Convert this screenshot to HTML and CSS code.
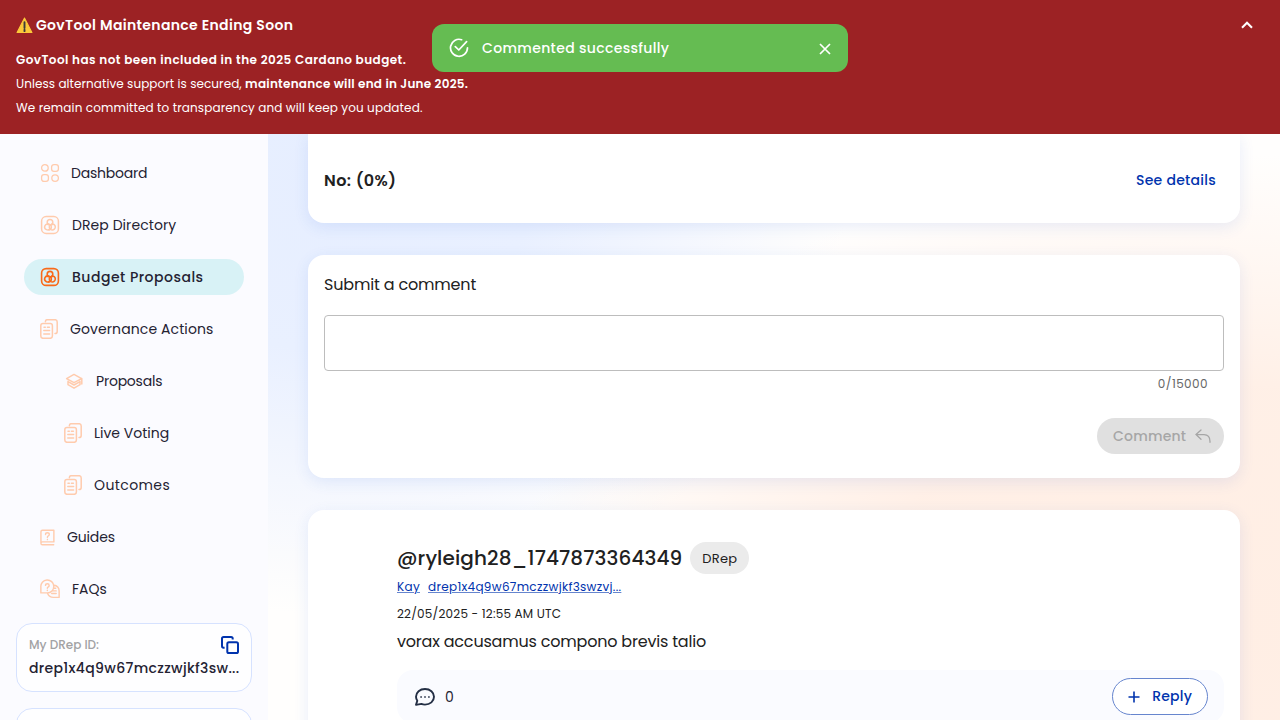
FILE: index.html
```
<!DOCTYPE html>
<html lang="en">
<head>
<meta charset="utf-8">
<title>GovTool</title>
<link rel="stylesheet" href="styles.css">
</head>
<body>
<svg class="defs" width="0" height="0" aria-hidden="true">
  <symbol id="i-grid" viewBox="0 0 20 20"><circle cx="4.9" cy="4.9" r="3.3"/><rect x="11.6" y="1.6" width="6.8" height="6.8" rx="2.4"/><rect x="1.6" y="11.6" width="6.8" height="6.8" rx="2.4"/><circle cx="15.1" cy="15.1" r="3.3"/></symbol>
  <symbol id="i-drep" viewBox="0 0 20 20"><rect x="1.6" y="1.6" width="16.8" height="16.8" rx="4.5"/><circle cx="10" cy="7.2" r="2.8"/><path d="M8.2 9A3 3 0 1 0 10.2 13.5M11.8 9A3 3 0 1 1 9.4 11.2M7.3 9.3A3 3 0 1 1 7.6 15M12.7 9.3 10 10.3"/></symbol>
  <symbol id="i-docs" viewBox="0 0 18 20"><rect x=".8" y="4.6" width="11.6" height="14.7" rx="2.2"/><path d="M5.4 2.8V2.5Q5.4.7 7.2.7H15Q17.2.7 17.2 2.9V12.5Q17.2 14.6 15 14.6M4 8.2H5.3M7.4 8.2H9.4M3.8 11.4H9.6M3.8 14.9H9.6"/></symbol>
  <symbol id="i-cap" viewBox="0 0 20 20"><path d="M10 3.4 2.6 7.6 10 11.7 17.6 7.6ZM17.8 7.6V13M4 10.2V13.7L10 17.2 16 13.7V10.2M4 10.6 10 14 16 10.6"/></symbol>
  <symbol id="i-book" viewBox="0 0 16 18"><path d="M1 15.1V2.8Q1 1.2 2.6 1.2H14.8V13.7H2.4Q1 13.7 1 15.1 1 16.8 2.6 16.8H14.6M5.9 5.8Q5.9 4 7.9 4 9.9 4 9.9 5.8 9.9 7 8.6 7.6 7.9 8 7.9 9M7.9 11V11.3"/></symbol>
  <symbol id="i-faq" viewBox="0 0 21 20"><path d="M.9 14.1V7.9A6.8 6.8 0 1 1 7.7 14.1ZM14.2 5.8Q20.1 6.8 20.1 12.2V18.8H14Q9.7 18.8 8 14.7M14.7 9.3H16.5M13.5 12H17M12.3 14.7H17M5.8 6.2Q5.8 4.4 7.7 4.4 9.6 4.4 9.6 6.2 9.6 7.4 8.4 8 7.7 8.4 7.7 9.3M7.7 11.4V11.6"/></symbol>
</svg>
<header class="banner">
  <div class="banner-head">
    <h1 class="banner-title"><svg class="warn" viewBox="0 0 16 16"><path class="warn-body" d="M8 1 15 14.6H1Z"/><path class="warn-mark" d="M8 5V10.3M8 12V13.3"/></svg><span class="b0">GovTool Maintenance Ending Soon</span></h1>
    <svg class="chevron" viewBox="0 0 12 8"><path d="M1 6.7 6 1.7 11 6.7"/></svg>
  </div>
  <p class="banner-line"><b class="b1">GovTool has not been included in the 2025 Cardano budget.</b></p>
  <p class="banner-line"><span class="b2">Unless alternative support is secured, </span><b class="b3">maintenance will end in June 2025.</b></p>
  <p class="banner-line"><span class="b4">We remain committed to transparency and will keep you updated.</span></p>
</header>
<div class="toast">
  <svg class="toast-ok" viewBox="0 0 20 20"><path d="M12.6 1.7A8.5 8.5 0 1 0 18.5 9.8M6.3 8.7 9.8 12 17.6 3.6"/></svg>
  <span class="toast-text">Commented successfully</span>
  <svg class="toast-x" viewBox="0 0 12 12"><path d="M1 1 11 11M11 1 1 11"/></svg>
</div>
<div class="shell">
  <aside class="sidebar">
    <nav class="nav">
      <a class="item"><svg class="ic w20 grid"><use href="#i-grid"/></svg><span class="n1">Dashboard</span></a>
      <a class="item"><svg class="ic w20"><use href="#i-drep"/></svg><span class="n2">DRep Directory</span></a>
      <a class="item active"><svg class="ic w20"><use href="#i-drep"/></svg><span class="n3">Budget Proposals</span></a>
      <a class="item"><svg class="ic w18"><use href="#i-docs"/></svg><span class="n4">Governance Actions</span></a>
      <a class="item sub"><svg class="ic w20"><use href="#i-cap"/></svg><span class="n5">Proposals</span></a>
      <a class="item sub"><svg class="ic w18"><use href="#i-docs"/></svg><span class="n6">Live Voting</span></a>
      <a class="item sub"><svg class="ic w18"><use href="#i-docs"/></svg><span class="n7">Outcomes</span></a>
      <a class="item"><svg class="ic w15 book"><use href="#i-book"/></svg><span class="n8">Guides</span></a>
      <a class="item"><svg class="ic w20"><use href="#i-faq"/></svg><span class="n9">FAQs</span></a>
    </nav>
    <div class="idcard">
      <div class="idhead"><span class="idlabel">My DRep ID:</span><svg class="copy" viewBox="0 0 18 18"><rect x="6.3" y="6.3" width="10.7" height="10.7" rx="1.6"/><path d="M3.6 11.7H2.6Q1 11.7 1 10.1V2.6Q1 1 2.6 1H10.1Q11.7 1 11.7 2.6V3.6"/></svg></div>
      <div class="idvalue">drep1x4q9w67mczzwjkf3sw...</div>
    </div>
    <div class="idcard next"></div>
  </aside>
  <main class="main">
    <section class="card votes"><strong class="no">No: (0%)</strong><a class="details">See details</a></section>
    <section class="card form">
      <h2 class="form-title"><span>Submit a comment</span></h2>
      <div class="field"></div>
      <div class="count"><span>0/15000</span></div>
      <button class="comment-btn"><span class="comment-label">Comment</span><svg class="reply-ic" viewBox="0 0 16 14"><path d="M6 1 1 5.6 6 10.2M1 5.6H9Q15 5.6 15 12.5V13.3"/></svg></button>
    </section>
    <section class="card post">
      <div class="author"><span class="handle">@ryleigh28_1747873364349</span><span class="chip"><span>DRep</span></span></div>
      <div class="links"><a class="k1">Kay</a><a class="k2">drep1x4q9w67mczzwjkf3swzvj...</a></div>
      <div class="date"><span>22/05/2025 - 12:55 AM UTC</span></div>
      <p class="body"><span>vorax accusamus compono brevis talio</span></p>
      <div class="actions">
        <svg class="bubble" viewBox="0 0 20 18"><path d="M2.3 12.8A7.2 7.2 0 0 1 1 8.8C1 4.4 4.9 1 10 1S19 4.4 19 8.8 15.1 16.6 10 16.6Q8 16.6 6.4 15.9L1 16.9Z"/><path class="dots" d="M5.3 9H6.9M9.2 9H10.8M13.1 9H14.7"/></svg>
        <span class="num">0</span>
        <button class="reply-btn"><svg class="plus" viewBox="0 0 12 12"><path d="M6 .5V11.5M.5 6H11.5"/></svg><span class="reply-label">Reply</span></button>
      </div>
    </section>
  </main>
</div>
</body>
</html>
```
FILE: styles.css
```
* { box-sizing: border-box; }
body {
  margin: 0; height: 720px; overflow: hidden; position: relative;
  display: flex; flex-direction: column;
  font-family: Poppins, Inter, "Open Sans", sans-serif;
  font-size: 14px; color: #212121; white-space: nowrap;
}
svg { display: block; fill: none; stroke: currentColor; flex: none; }
.defs { position: absolute; }
h1, h2, p { margin: 0; font-weight: 400; }
b { font-weight: 600; }

.banner { height: 134px; flex: none; background: #9c2224; color: #fff; padding: 12px 16px 0; }
.banner-head { display: flex; justify-content: space-between; align-items: center; height: 26px; margin-bottom: 10px; padding-right: 11px; }
.banner-title { display: flex; align-items: center; gap: 3px; font-size: 14px; font-weight: 600; }
.warn { width: 17px; height: 17px; }
.warn-body { fill: #fcc93a; stroke: #fcc93a; stroke-width: 1; stroke-linejoin: round; }
.warn-mark { stroke: #3b3b3b; stroke-width: 1.8; stroke-linecap: round; }
.chevron { width: 12px; height: 8px; stroke-width: 2.1; }
.banner-line { font-size: 12px; line-height: 24px; height: 24px; white-space: pre; }
.b0 { letter-spacing: .34px; }
.b1 { letter-spacing: .45px; }
.b2 { letter-spacing: .07px; }
.b3 { letter-spacing: .26px; }
.b4 { letter-spacing: .12px; }

.toast {
  position: absolute; left: 432px; top: 24px; width: 416px; height: 48px;
  border-radius: 12px; background: #65bc52; color: #fff;
  display: flex; align-items: center; padding: 0 17px; font-weight: 500;
}
.toast-ok { width: 20px; height: 20px; margin-right: 13px; stroke-width: 1.7; stroke-linecap: round; stroke-linejoin: round; }
.toast-text { letter-spacing: .34px; }
.toast-x { width: 12px; height: 12px; margin: 2px 0 0 auto; stroke-width: 1.7; }

.shell { flex: 1; min-height: 0; display: flex; }
.sidebar { width: 268px; flex: none; background: #fbfbff; padding-top: 21px; overflow: hidden; }
.nav { display: flex; flex-direction: column; gap: 16px; padding: 0 24px; margin-bottom: 16px; }
.item { display: flex; align-items: center; height: 36px; gap: 12px; padding-left: 16px; border-radius: 18px; color: #242232; }
.item.sub { padding-left: 40px; }
.item.active { background: #d8f2f6; font-weight: 500; }
.ic { height: 20px; color: #ffcbad; stroke-width: 1.5; stroke-linecap: round; stroke-linejoin: round; }
.ic.book { height: 17px; }
.ic.grid { margin-right: -1px; stroke-width: 1.3; }
.active .ic { color: #f96a19; stroke-width: 1.6; }
.w15 { width: 15px; } .w18 { width: 18px; } .w20 { width: 20px; }
.n1, .n5 { letter-spacing: -.22px; }
.n2 { letter-spacing: .07px; }
.n3 { letter-spacing: .5px; }
.n4 { letter-spacing: .1px; }
.n7 { letter-spacing: .4px; }
.n8 { letter-spacing: -.15px; }
.idcard { margin: 0 16px 16px; height: 69px; border: 1px solid #d6e2ff; border-radius: 16px; background: rgba(255,255,255,.7); padding: 11px 12px; }
.idhead { display: flex; justify-content: space-between; align-items: center; height: 20px; font-size: 12px; font-weight: 500; color: #a2a2a4; }
.copy { width: 18px; height: 18px; color: #0033ad; stroke-width: 2; }
.idvalue { margin-top: 2px; line-height: 22px; font-weight: 500; letter-spacing: .33px; color: #242232; }

.main {
  flex: 1; padding: 0 40px; overflow: hidden;
  display: flex; flex-direction: column; gap: 32px;
  background:
    radial-gradient(ellipse 720px 470px at 960px 490px, #ffeee4 0%, rgba(255,238,228,.9) 50%, rgba(255,243,235,0) 100%),
    radial-gradient(ellipse 520px 440px at 60px 40px, #e6eeff 0%, #e9f0ff 40%, rgba(233,240,255,0) 100%),
    #fffefd;
}
.card { background: #fff; border-radius: 16px; box-shadow: 0 4px 15px rgba(47,98,220,.11); flex: none; }
.votes { height: 89px; border-radius: 0 0 16px 16px; padding: 4px 24px 0 16px; display: flex; justify-content: space-between; align-items: center; }
.no { font-size: 16px; font-weight: 600; letter-spacing: .42px; }
.details { color: #0033ad; font-weight: 500; letter-spacing: .27px; }
.form { height: 223px; padding: 16px; display: flex; flex-direction: column; }
.form-title { font-size: 16px; line-height: 28px; height: 44px; letter-spacing: -.18px; }
.field { height: 56px; border: 1px solid #bdbdbd; border-radius: 4px; flex: none; }
.count { font-size: 12px; line-height: 20px; margin-top: 3px; padding-right: 16px; text-align: right; letter-spacing: .42px; color: #666; }
button { font: inherit; }
.comment-btn { align-self: flex-end; margin-top: 24px; width: 127px; height: 36px; border: 0; border-radius: 18px; background: #e0e0e0; color: #a6a6a6; font-weight: 500; display: flex; align-items: center; justify-content: space-between; padding: 0 13px 0 16px; }
.comment-label { letter-spacing: .2px; }
.reply-ic { width: 16px; height: 14px; stroke-width: 1.3; stroke-linecap: round; }
.post { height: 260px; padding: 32px 16px 0 89px; }
.author { display: flex; align-items: center; gap: 8px; height: 32px; }
.handle { font-size: 20px; font-weight: 500; letter-spacing: .1px; }
.chip { width: 59px; height: 32px; border-radius: 16px; background: #ebebeb; font-size: 13px; letter-spacing: .25px; padding-top: 1px; display: flex; align-items: center; justify-content: center; }
.links { display: flex; gap: 8px; font-size: 12px; line-height: 18px; margin-top: 4px; letter-spacing: .31px; color: #0033ad; text-decoration: underline; text-decoration-color: #6685ce; }
.date { font-size: 12px; line-height: 20px; margin-top: 8px; letter-spacing: .2px; }
.body { font-size: 16px; line-height: 24px; margin-top: 6px; letter-spacing: -.2px; }
.actions { height: 53px; margin-top: 16px; border-radius: 16px; background: #fafbff; display: flex; align-items: center; padding: 0 16px; }
.bubble { width: 20px; height: 18px; color: #242f45; stroke-width: 1.9; stroke-linejoin: round; margin: 1px 0 0 2px; }
.dots { stroke-width: 1.6; }
.num { margin: 1px 0 0 10px; color: #242232; }
.reply-btn { margin-left: auto; width: 96px; height: 37px; border: 1px solid #6685ce; border-radius: 19px; background: #fff; color: #0033ad; font-weight: 500; display: flex; align-items: center; justify-content: space-between; padding: 0 15px; }
.reply-label { letter-spacing: .2px; }
.plus { width: 12px; height: 12px; stroke-width: 1.6; }
```
